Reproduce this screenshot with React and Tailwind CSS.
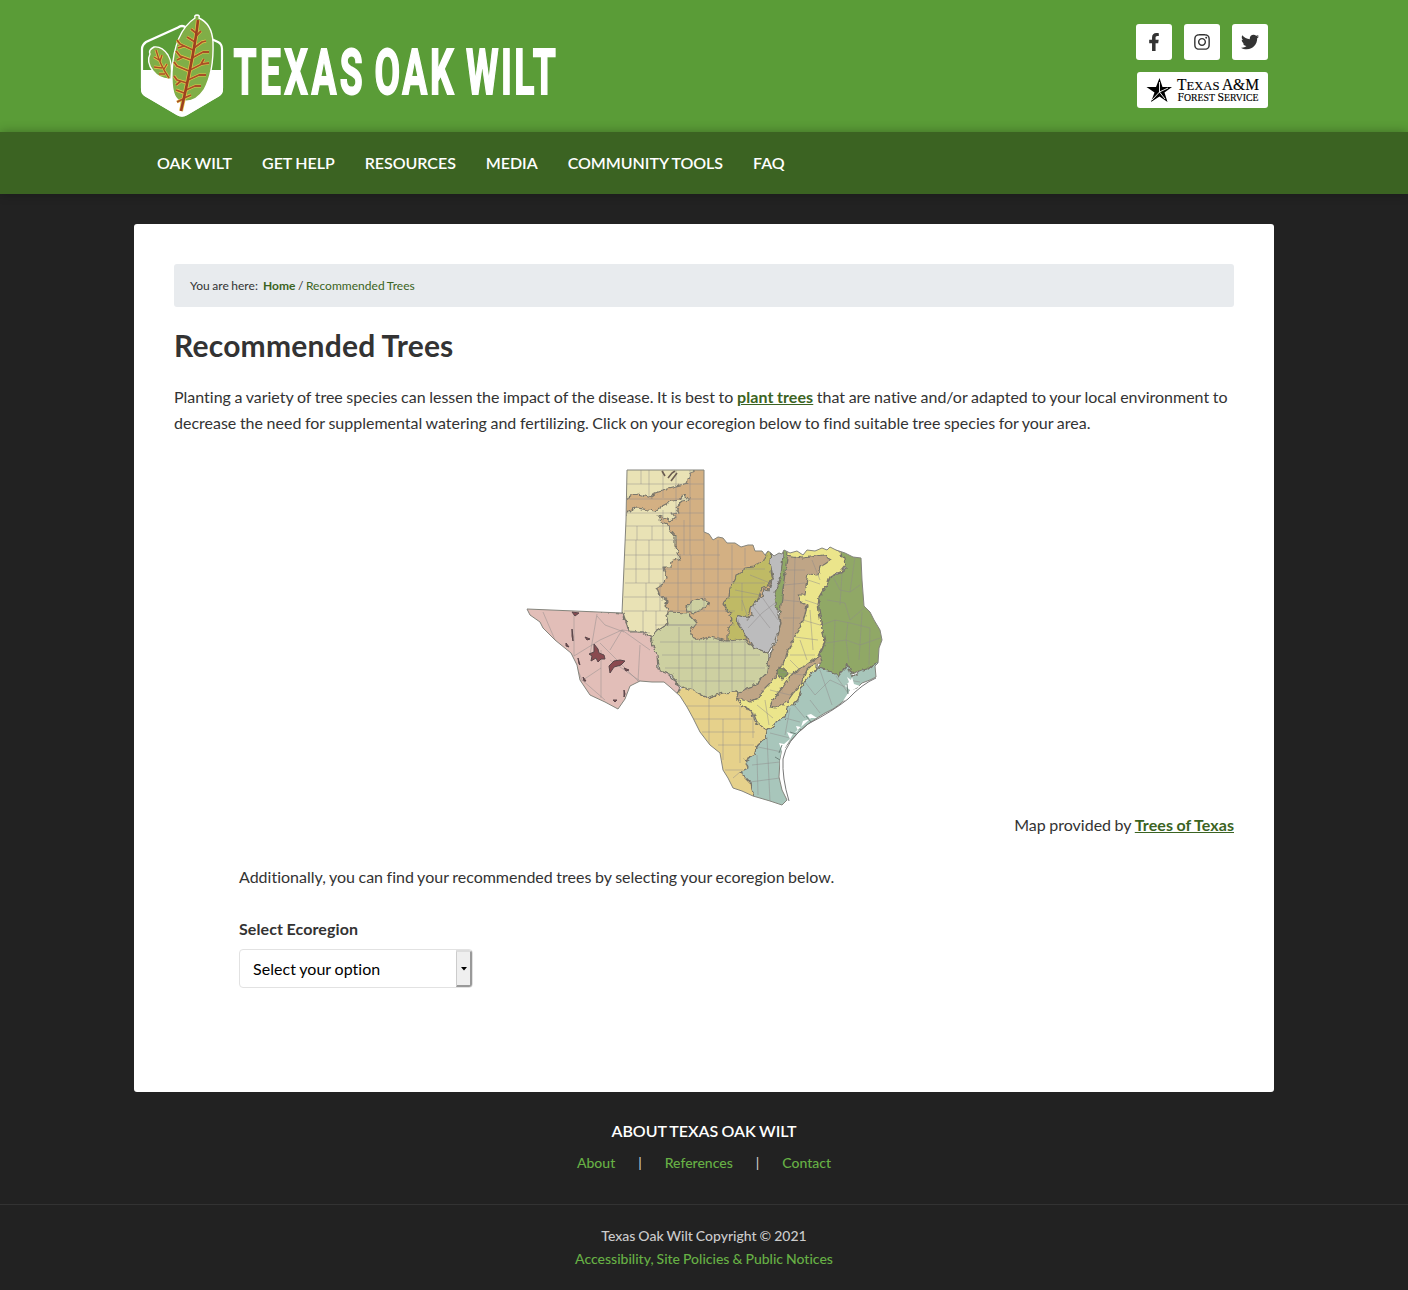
import { FaFacebookF, FaInstagram, FaTwitter } from "react-icons/fa";

const nav = ["OAK WILT", "GET HELP", "RESOURCES", "MEDIA", "COMMUNITY TOOLS", "FAQ"];

const OUTLINE =
  "M627 470H704V532L709 534 713 540 718 537 723 538 727 543 735 543 741 547 748 545 753 545 755 551 762 551 765 555 768 551 771 553 774 556 779 553 782 554 784 550 790 553 797 551 803 555 807 550 815 551 822 548 827 550 830 547 836 550 845 553 853 557 861 558 862 580 864 606 870 612 874 620 880 630 882 640 879 648 878 663 875 666 876 677 870 680 862 683 857 688 850 690 847 698 840 704 833 709 825 713 817 718 808 724 800 731 793 738 787 745 782 752 780 760 779 777 782 790 787 800 782 805 770 801 753 796 742 791 733 788 728 778 723 770 720 753 710 745 700 732 693 718 687 707 680 696 670 687 664 682 652 682 640 681 630 686 625 699 618 709 605 702 590 695 580 680 577 665 571 653 555 640 543 628 540 622 530 615 527 609 622 613 626 520Z";

const regions = [
  ["#d3b083", "M620 465H710V530L775 548V600L750 645H690L620 600Z"],
  ["#e9e2b5", "M620 465H697L693 472 690 476 686 482 688 483 680 485 668 488 662 491 655 493 652 498 645 496 638 494 632 495 628 498 620 500Z"],
  ["#e9e2b5", "M620 522L627 514 632 509 637 508 648 510 655 511 662 506 672 501 680 500 685 494 687 498 690 498 688 501 682 502 676 507 680 512 672 513 675 517 670 521 664 518 658 516 662 522 667 524 670 530 675 536 675 545 678 552 680 561 675 558 672 563 671 567 664 567 667 578 662 585 657 588 660 596 667 601 665 606 668 609 666 614 668 624 663 628 657 631 651 637 642 632 629 632 627 625 623 613 618 612Z"],
  ["#cdd0a1", "M668 612L688 613 697 623 690 632 693 637 700 640 710 637 727 641 743 636 750 645 768 653 767 673 753 687 738 692 723 693 707 698 693 690 683 689 677 684 672 675 660 671 658 660 655 655 652 642 651 637 657 631 668 624 666 614Z"],
  ["#cdd0a1", "M687 607L692 601 700 599 708 601 709 605 702 609 694 613 688 611Z"],
  ["#e2beb8", "M520 605L622 613 627 625 629 632 642 632 650 637 652 645 657 655 658 670 668 674 674 680 680 690 682 698 660 720H580L520 640Z"],
  ["#bfba65", "M768 548L766 559 760 562 754 566 745 567 743 572 736 575 735 580 730 588 729 597 723 603 727 610 733 612 730 615 733 623 728 630 728 641 748 639 738 623 737 615 748 618 750 608 757 602 762 588 768 587 772 577 770 562 774 548Z"],
  ["#bcbcbd", "M771 550L770 562 773 577 769 590 764 589 762 597 756 601 751 609 752 616 748 618 737 615 738 623 746 635 753 647 768 653 774 643 781 623 777 612 779 590 783 570V550Z"],
  ["#ebe58b", "M786 545H833L845 553 846 565 841 571 830 577 829 583 823 590 819 597 818 605 821 622 825 641 818 656 817 667 815 672 809 675 805 681 801 690 798 700 792 706 787 708 785 718 777 721 773 726 767 730 758 725 753 712 742 706 737 698 762 690 788 645 790 600Z"],
  ["#bfa586", "M786 555L792 556 803 558 823 555 831 560 825 564 820 567 818 575 808 574 806 585 805 595 798 595 801 602 807 605 804 619 796 634 787 653 783 665 773 680 763 690 758 698 749 702 737 698 738 692 753 687 767 673 769 657 777 640 781 623 779 610 783 590Z"],
  ["#8fa866", "M784 546L781 575 775 597 777 610 780 612 782 597 785 572 789 546Z"],
  ["#bfa586", "M770 707L774 698 783 687 788 680 797 670 805 666 817 657 823 658 822 663 813 664 806 671 801 684 794 692 787 702 775 708Z"],
  ["#879e5e", "M778 667L786 670 788 674 782 680 777 674Z"],
  ["#90a866", "M829 543L838 551 845 558 846 568 838 574 830 577 828 583 823 591 819 597 819 609 822 628 825 642 819 656 823 660 818 668 827 670 834 673 838 677 843 669 848 664 851 674 859 671 867 669 872 665 878 663 890 655V550Z"],
  ["#a8c6bb", "M890 660L872 665 867 669 859 672 852 677 848 665 843 670 838 677 834 673 827 670 818 668 815 672 809 675 805 681 801 690 798 700 792 706 787 708 785 718 777 721 773 726 767 730 766 738 758 745 755 755 746 760 740 772 751 783 754 800 790 815 800 730 890 690Z"],
  ["#e6d18b", "M683 687L693 690 707 698 723 693 738 692 737 698 742 706 753 712 755 722 767 730 766 738 758 745 755 755 745 760 748 768 740 772 751 783 754 800 720 800 670 700Z"],
];

const spots = [
  "M572 612l3 4 4-3z", "M572 629l1 8 0 4-1-5z", "M585 637l5 2-3 1z", "M566 643l3 4-3-1z",
  "M594 644l4 5 1 4 5 2 1 4-4 0-3 3-2-4-5 3 1-5-3-2 5-2z", "M609 666l5-5 6-1 5 1-4 4-7 2-4 6z",
  "M624 668l5 2-3 1z", "M578 658l2 7-1-1z", "M583 677l3 4-2 0z", "M624 690l1 4-1 3z", "M613 700l4 0-2 2z",
];

const counties =
  "M627 484H704M627 499H704M626 513H704M626 526H704M625 540H704M625 555H720M625 569H765M625 583H765M624 597H760M624 611H735M668 625H735M641 470V484M649 470V498M663 470V498M676 470V520M690 470V555M637 526V540M652 526V540M636 540V583M649 540V583M663 510V583M646 583V611M660 583V611M643 611V632M656 611V632M684 520V555M678 555V611M691 555V611M704 532V611M718 540V640M732 545V583M745 548V566M742 583V611M655 625H690M660 642H745M662 655H760M665 668H765M675 681H755M679 627V685M692 640V690M706 640V697M719 640V694M732 640V692M745 640V690M687 706H740M690 719H752M702 732H755M718 745H754M723 719V760M709 697V744M740 706V763M725 770H743M753 712V738M733 778L740 772" +
  "M750 575L770 583M735 590L760 595M742 600L748 618M752 605L770 628M762 597L778 620M748 628L762 613 775 603M785 570L805 570M784 585L805 583M783 600L803 602M783 618L800 618M795 556L793 640M808 580L820 584M805 600L820 605M803 620L820 625M795 637L818 640M790 655L815 655M780 672L803 675M770 690L790 695M757 705L773 718M812 560L820 580M810 610L813 650M800 640L807 660M790 660L800 670M765 700L769 725" +
  "M832 575L840 590 850 592 860 585M827 600L845 603 850 620 864 608M822 625L835 620 850 623 870 628M826 643L846 640 860 645 880 638M842 573L840 605M855 557L850 592M848 622L846 640 849 663M862 612L859 660M870 628L869 665M835 620L833 670" +
  "M805 682L815 695 830 680 845 687M810 700L820 713M795 706L805 718M785 718L800 722M770 733L790 738M758 747L782 752M752 765L780 762M750 782L780 778M767 737L770 802M757 755L758 795M820 670L832 705M836 676L848 693M848 680L860 682M790 708L785 735" +
  "M574 612V656L600 640 622 630M597 614L590 655M597 616L605 625 624 632M571 653L582 680 605 700M600 643L640 683M601 650V698M610 650L622 630 650 650M622 630L650 633M640 645L638 681M610 660L643 683M543 612L555 640M580 682L601 668";

function TexasMap() {
  return (
    <svg className="mx-auto block h-[350px] w-[368px]" viewBox="520 462 368 350" aria-label="Map of Texas ecoregions">
      <defs>
        <clipPath id="state"><path d={OUTLINE} /></clipPath>
        <filter id="rough" x="0" y="0" width="1" height="1">
          <feTurbulence type="fractalNoise" baseFrequency="0.2" numOctaves="2" seed="4" />
          <feDisplacementMap in="SourceGraphic" scale="5" xChannelSelector="R" yChannelSelector="G" />
        </filter>
      </defs>
      <g clipPath="url(#state)">
        <g filter="url(#rough)" stroke="#77746a" strokeWidth="1.2" strokeLinejoin="round">
          {regions.map(([fill, d]) => <path key={d} d={d} fill={fill} />)}
        </g>
        <path d={counties} fill="none" stroke="#8f8b8b" strokeWidth="0.8" opacity="0.6" />
        <g fill="#8a4a50" stroke="#59464a" strokeWidth="1">{spots.map((d) => <path key={d} d={d} />)}</g>
        <g fill="none" stroke="#6b5d52" strokeWidth="1.6">
          <path d="M662 471l3 5M668 478l4-5 3-2M671 481l6-8" />
        </g>
      </g>
      <path d={OUTLINE} fill="none" stroke="#85857d" strokeWidth="1" />
      <g fill="#fff">
        <path d="M850 690l-5-4 4-4-2-5 4 3 1-3 2 7 6 2-9 5-3 8-5 2zM817 718l-6-4-4 1 3 4-7 2-2 6-5-1 2 5-6 3-5-2 3 7-6 5-5-1 3 8-2 10 1 20 6 14 4 0-4-12-3-20 1-15 8-14 18-16z" />
      </g>
      <path d="M876 678Q862 684 848 699 833 711 808 724 786 741 783 759 782 778 789 801" fill="none" stroke="#777" strokeWidth="1" />
      <path d="M847 684l1 10M806 716l5 6M790 732l6 2M775 757l5 3M782 745l-3 8" stroke="#70857d" strokeWidth="1" />
    </svg>
  );
}

const bigVeins =
  "M196 33l-5-4M195 42l-8-5M193 50l-13-6-3-4M184 46l-6 2M191 60l-11-4-4-5M183 57l-6 3M189 71l-12-5-3-4M187 83l-10-3-3-4M181 81l-5 4M184 93l-8-3M183 99l-6 3M196 36l5-5M194 48l8-6 4-1M192 58l11-6 6 0M190 70l12-6 7-1M201 64l3-5M188 80l11-5 7 0M186 90l9-4 6 0M184 98l7-3";
const bigRib = "M198 20Q195 50 181 111";
const smallRib = "M156 50Q160 65 169 78";
const smallVeins = "M159 60l-5-3M162 68l-8-1M165 74l-6 0M160 61l2-6M164 69l3-5";

function Logo() {
  return (
    <svg className="h-[132px] w-[440px]" viewBox="134 0 440 132" aria-label="Texas Oak Wilt">
      <path d="M178 27.500Q182 24.500 186 27.500L218 42Q222 44 222 49V88Q222 93 218 95.500L187 114Q182 117 177 114L146 95.500Q142 93 142 88V49Q142 45 146 42Z" fill="none" stroke="#fff" strokeWidth="2.200" />
      <path d="M141 70H223V90Q223 94 219 96.500L187 115Q182 118.500 177 115L145 96.500Q141 94 141 90Z" fill="#fff" />
      <path d="M154 47Q162 46 168 55 173 63 171 79 160 80 153 71 146 62 150 54 148 50 154 47Z" fill="#80ae47" stroke="#fff" strokeWidth="1.400" />
      <path d="M195 18Q194 15 197 15 200 15 199 18 212 24 213 42 214 72 204 90 196 102 185 101L182 111 180 109 180 101Q171 98 172 72 174 32 195 18Z" fill="#80ae47" stroke="#fff" strokeWidth="1.400" />
      <g fill="none" strokeLinejoin="round">
        <path d={bigVeins} stroke="#e6c64b" strokeWidth="3" />
        <path d={bigRib} stroke="#e6c64b" strokeWidth="4" />
        <path d={smallVeins + smallRib} stroke="#e6c64b" strokeWidth="2.800" />
        <path d={bigVeins} stroke="#a85027" strokeWidth="1.800" />
        <path d={smallVeins + smallRib} stroke="#a85027" strokeWidth="1.400" />
        <path d={bigRib} stroke="#9c4120" strokeWidth="2.600" />
      </g>
      <g fill="#fff" stroke="#fff" strokeWidth="1.800" className="font-['Roboto'] text-[63px] font-bold">
        <text transform="translate(233.500 94) scale(.59 1)" textLength="219">TEXAS</text>
        <text transform="translate(374.500 94) scale(.59 1)" textLength="134">OAK</text>
        <text transform="translate(466 94) scale(.59 1)" textLength="152">WILT</text>
      </g>
    </svg>
  );
}

function ForestService() {
  return (
    <svg className="h-9 w-[131px] rounded-[3px] bg-white" viewBox="0 0 131 36" aria-label="Texas A&M Forest Service">
      <path d="M22.500 6L25.500 15H35L27.500 20.500 30.500 30 22.500 24.500 14 30 17.500 20.500 9.500 15H19Z" fill="#000" />
      <path d="M22.500 10V20L15 28M22.500 20L28 27M22.500 20L31 16" stroke="#fff" strokeWidth="0.900" fill="none" />
      <g className="font-['Liberation_Serif']" fill="#000" stroke="#000" strokeWidth="0.150">
        <text x="40" y="18" textLength="82" lengthAdjust="spacingAndGlyphs" fontSize="16">T<tspan fontSize="13">EXAS</tspan> A&amp;M</text>
        <text x="40.500" y="29" textLength="81" lengthAdjust="spacingAndGlyphs" fontSize="12">F<tspan fontSize="10">OREST</tspan> S<tspan fontSize="10">ERVICE</tspan></text>
      </g>
    </svg>
  );
}

export default function App() {
  return (
    <div className="min-h-[1290px] bg-[#222] font-['Lato',sans-serif] text-base leading-[26px] text-[#333] [font-variant-ligatures:none] [word-spacing:-0.033em]">
      <header className="h-[132px] bg-[#5a9c37]">
        <div className="mx-auto flex w-[1140px] justify-between">
          <Logo />
          <div className="mr-1.5 flex flex-col items-end gap-3 pt-6">
            <div className="flex gap-3">
              {[FaFacebookF, FaInstagram, FaTwitter].map((Icon, i) => (
                <a key={i} className="flex size-9 items-center justify-center rounded-[3px] bg-white text-[#333]"><Icon size={18} /></a>
              ))}
            </div>
            <ForestService />
          </div>
        </div>
      </header>
      <nav className="relative h-[62px] bg-[#3b6322] shadow-[0_0_10px_rgba(0,0,0,0.3)]">
        <ul className="mx-auto flex h-full w-[1140px] items-center gap-[30px] pl-[23px] font-semibold tracking-[-0.03px] text-white">
          {nav.map((n) => <li key={n}>{n}</li>)}
        </ul>
      </nav>
      <main className="mx-auto mt-[30px] h-[868px] w-[1140px] rounded-[3px] bg-white p-10">
        <div className="h-[43px] rounded-[3px] bg-[#e8ebee] px-4 text-xs leading-[43px] tracking-[0.03px] [word-spacing:-0.05em]">
          You are here: &nbsp;<b className="text-[#3b6322]">Home</b> / <span className="text-[#3b6322]">Recommended Trees</span>
        </div>
        <h1 className="mt-[19px] text-[30px] leading-[39px] font-bold tracking-[0.22px]">Recommended Trees</h1>
        <p className="mt-[19px]">
          Planting a variety of tree species can lessen the impact of the disease. It is best to <a className="font-bold tracking-[0.1px] text-[#3b6322] underline">plant trees</a> that are native and/or adapted to your local environment to decrease the need for supplemental watering and fertilizing. Click on your ecoregion below to find suitable tree species for your area.
        </p>
        <div className="mt-[26px]"><TexasMap /></div>
        <p className="text-right">Map provided by <a className="font-bold tracking-[0.08px] text-[#3b6322] underline">Trees of Texas</a></p>
        <div className="ml-[65px] pt-[26px]">
          <p>Additionally, you can find your recommended trees by selecting your ecoregion below.</p>
          <p className="mt-[26px] font-bold tracking-[0.1px]">Select Ecoregion</p>
          <div className="mt-[7px] flex h-[39px] w-[234px] items-stretch justify-between rounded border border-[#e2e2e2] pl-[13px] text-black">
            <span className="self-center tracking-[0.05px]">Select your option</span>
            <span className="flex w-4 items-center justify-center rounded-r-[3px] border-t-2 border-r-2 border-b-2 border-l border-t-[#ddd] border-r-[#999] border-b-[#999] border-l-[#ccc] bg-[#efefef]">
              <svg className="h-1 w-1.5" viewBox="0 0 6 4"><path d="M0 0H6L3 3.500Z" /></svg>
            </span>
          </div>
        </div>
      </main>
      <footer>
        <div className="flex h-[113px] flex-col items-center border-b border-[#333] pt-[26px]">
          <h2 className="font-semibold tracking-[-0.04px] text-white">ABOUT TEXAS OAK WILT</h2>
          <div className="mt-1.5 flex gap-[23px] text-sm leading-[26px] font-medium text-[#67b045]">
            <a>About</a><span className="text-[#ccc]">|</span><a>References</a><span className="text-[#ccc]">|</span><a>Contact</a>
          </div>
        </div>
        <div className="pt-[19px] text-center text-sm leading-[23px] font-medium text-[#ccc]">
          <p>Texas Oak Wilt Copyright © 2021</p>
          <p className="text-[#67b045]">Accessibility, Site Policies &amp; Public Notices</p>
        </div>
      </footer>
    </div>
  );
}
